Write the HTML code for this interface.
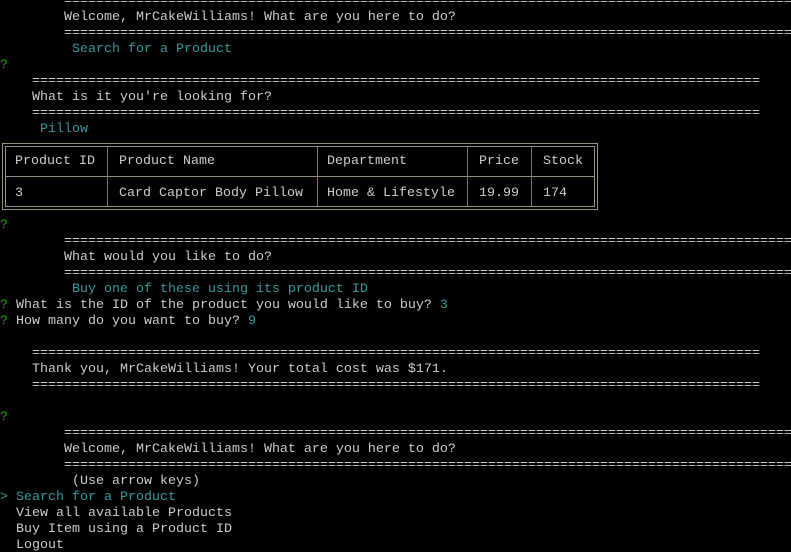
<!DOCTYPE html>
<html><head><style>
html,body{margin:0;width:791px;height:552px;overflow:hidden}
body{background:#000;position:relative;font-family:"Liberation Mono",monospace;font-size:13.33px;color:#cccccc}
.w{position:absolute;left:0;top:2px;width:791px;height:540px}
.l{position:absolute;left:0;height:16px;line-height:16px;white-space:pre}
.t{color:#3a9a9e}.g{color:#16a30f}
.b{position:absolute;box-sizing:border-box}
</style></head><body>
<div class="b" style="left:2px;top:143px;width:596px;height:67px;border:1px solid #9a8f80"></div>
<div class="b" style="left:5px;top:146px;width:590px;height:61px;border:1px solid #9a8f80"></div>
<div class="b" style="left:6px;top:176px;width:588px;height:1px;background:#9a8f80"></div>
<div class="b" style="left:107px;top:147px;width:1px;height:59px;background:#5a7a9a"></div>
<div class="b" style="left:317px;top:147px;width:1px;height:59px;background:#5a7a9a"></div>
<div class="b" style="left:467px;top:147px;width:1px;height:59px;background:#5a7a9a"></div>
<div class="b" style="left:531px;top:147px;width:1px;height:59px;background:#5a7a9a"></div>
<div class="w">
<div class="l" style="top:-8px">        ===========================================================================================</div>
<div class="l" style="top:8px">        Welcome, MrCakeWilliams! What are you here to do?</div>
<div class="l" style="top:24px">        ===========================================================================================</div>
<div class="l t" style="top:40px">         Search for a Product</div>
<div class="l g" style="top:56px">?</div>
<div class="l" style="top:72px">    ===========================================================================================</div>
<div class="l" style="top:88px">    What is it you're looking for?</div>
<div class="l" style="top:104px">    ===========================================================================================</div>
<div class="l t" style="top:120px">     Pillow</div>
<div class="l" style="top:152px;left:15px">Product ID</div>
<div class="l" style="top:152px;left:119px">Product Name</div>
<div class="l" style="top:152px;left:327px">Department</div>
<div class="l" style="top:152px;left:479px">Price</div>
<div class="l" style="top:152px;left:543px">Stock</div>
<div class="l" style="top:184px;left:15px">3</div>
<div class="l" style="top:184px;left:119px">Card Captor Body Pillow</div>
<div class="l" style="top:184px;left:327px">Home &amp; Lifestyle</div>
<div class="l" style="top:184px;left:479px">19.99</div>
<div class="l" style="top:184px;left:543px">174</div>
<div class="l g" style="top:216px">?</div>
<div class="l" style="top:232px">        ===========================================================================================</div>
<div class="l" style="top:248px">        What would you like to do?</div>
<div class="l" style="top:264px">        ===========================================================================================</div>
<div class="l t" style="top:280px">         Buy one of these using its product ID</div>
<div class="l" style="top:296px"><span class="g">?</span> What is the ID of the product you would like to buy? <span class="t">3</span></div>
<div class="l" style="top:312px"><span class="g">?</span> How many do you want to buy? <span class="t">9</span></div>
<div class="l" style="top:344px">    ===========================================================================================</div>
<div class="l" style="top:360px">    Thank you, MrCakeWilliams! Your total cost was $171.</div>
<div class="l" style="top:376px">    ===========================================================================================</div>
<div class="l g" style="top:408px">?</div>
<div class="l" style="top:424px">        ===========================================================================================</div>
<div class="l" style="top:440px">        Welcome, MrCakeWilliams! What are you here to do?</div>
<div class="l" style="top:456px">        ===========================================================================================</div>
<div class="l" style="top:472px">         (Use arrow keys)</div>
<div class="l t" style="top:488px">&gt; Search for a Product</div>
<div class="l" style="top:504px">  View all available Products</div>
<div class="l" style="top:520px">  Buy Item using a Product ID</div>
<div class="l" style="top:536px">  Logout</div>
</div>
</body></html>
